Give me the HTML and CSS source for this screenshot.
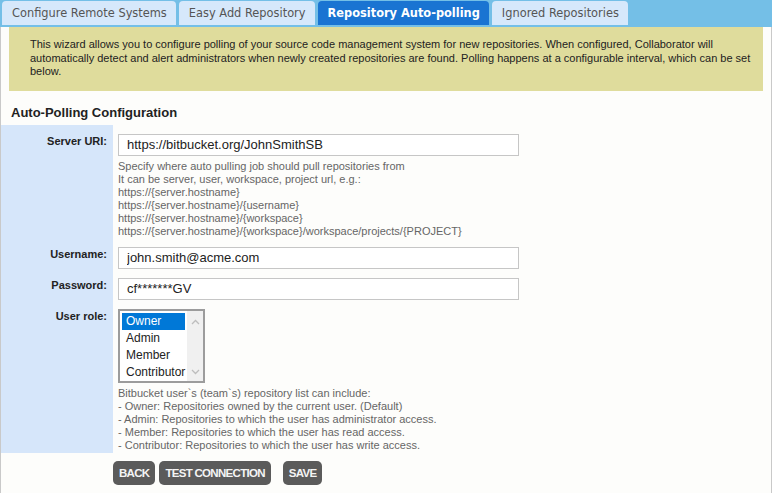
FILE: index.html
```html
<!DOCTYPE html>
<html lang="en">
<head>
    <meta charset="UTF-8">
    <meta name="viewport" content="width=device-width, initial-scale=1.0">
    <title>Repository Auto-polling</title>
    <link rel="stylesheet" href="styles.css">
</head>
<body>
    <div class="tabs">
        <a class="tab">Configure Remote Systems</a>
        <a class="tab">Easy Add Repository</a>
        <a class="tab active">Repository Auto-polling</a>
        <a class="tab">Ignored Repositories</a>
    </div>

    <div class="panel">
        <div class="info">
            This wizard allows you to configure polling of your source code management system for new repositories. When configured, Collaborator will automatically detect and alert administrators when newly created repositories are found. Polling happens at a configurable interval, which can be set below.
        </div>

        <h3 class="section-title">Auto-Polling Configuration</h3>

        <table class="form">
            <tr>
                <th>Server URI:</th>
                <td>
                    <input class="field" type="text" value="https://bitbucket.org/JohnSmithSB">
                    <div class="hint">
                        Specify where auto pulling job should pull repositories from<br>
                        It can be server, user, workspace, project url, e.g.:<br>
                        https://{server.hostname}<br>
                        https://{server.hostname}/{username}<br>
                        https://{server.hostname}/{workspace}<br>
                        https://{server.hostname}/{workspace}/workspace/projects/{PROJECT}
                    </div>
                </td>
            </tr>
            <tr>
                <th>Username:</th>
                <td><input class="field" type="text" value="john.smith@acme.com"></td>
            </tr>
            <tr>
                <th>Password:</th>
                <td><input class="field" type="text" value="cf*******GV"></td>
            </tr>
            <tr class="last">
                <th>User role:</th>
                <td>
                    <div class="listbox">
                        <ul>
                            <li class="selected">Owner</li>
                            <li>Admin</li>
                            <li>Member</li>
                            <li>Contributor</li>
                        </ul>
                        <div class="scroll">
                            <svg width="9" height="6" viewBox="0 0 9 6"><path d="M1 5 L4.5 1.5 L8 5" fill="none" stroke="#bdbdbd" stroke-width="1.3"/></svg>
                            <svg width="9" height="6" viewBox="0 0 9 6"><path d="M1 1 L4.5 4.5 L8 1" fill="none" stroke="#bdbdbd" stroke-width="1.3"/></svg>
                        </div>
                    </div>
                    <div class="hint">
                        Bitbucket user`s (team`s) repository list can include:<br>
                        - Owner: Repositories owned by the current user. (Default)<br>
                        - Admin: Repositories to which the user has administrator access.<br>
                        - Member: Repositories to which the user has read access.<br>
                        - Contributor: Repositories to which the user has write access.
                    </div>
                </td>
            </tr>
        </table>

        <div class="actions">
            <button class="btn">BACK</button>
            <button class="btn">TEST CONNECTION</button>
            <button class="btn save">SAVE</button>
        </div>
    </div>
</body>
</html>
```

FILE: styles.css
```css
body {
    margin: 0;
    font-family: "Liberation Sans", Arial, sans-serif;
    background: #fdfdfb;
    color: #222;
}
.tabs {
    display: flex;
    gap: 3px;
    height: 27px;
    padding: 1px 0 0 2px;
    box-sizing: border-box;
    background: #74bfe7;
}
.tab {
    height: 24px;
    line-height: 24px;
    padding: 0 9px 0 10px;
    background: #d6e8fb;
    color: #555;
    font-family: "DejaVu Sans", Verdana, sans-serif;
    font-size: 11.4px;
    border-radius: 4px 4px 0 0;
}
.tab.active {
    background: #1a74d2;
    color: #fff;
    font-weight: bold;
}
.panel {
    min-height: 466px;
    border-left: 1px solid #c9c9c9;
    border-right: 1px solid #c9c9c9;
}
.info {
    margin: 0 8px;
    padding: 11px 12px 12px 21px;
    background: #dfdc9c;
    font-size: 11px;
    line-height: 13.5px;
    color: #222;
}
.section-title {
    margin: 14px 0 4px 10px;
    font-size: 13px;
    line-height: 16px;
}
.form {
    border-collapse: collapse;
}
.form th {
    width: 106px;
    padding: 9px 6px 0 0;
    background: #d6e6fa;
    text-align: right;
    vertical-align: top;
    font-size: 11px;
    line-height: 14px;
}
.form td {
    padding: 9px 0 0 5px;
    vertical-align: top;
}
.form tr.last th,
.form tr.last td {
    padding-bottom: 1px;
}
.field {
    display: block;
    width: 401px;
    height: 22px;
    box-sizing: border-box;
    margin: 0;
    padding: 0 8px;
    border: 1px solid #c6c6c6;
    background: #fff;
    font-family: "Liberation Sans", Arial, sans-serif;
    font-size: 13px;
    color: #222;
}
.hint {
    margin-top: 4px;
    font-size: 11px;
    line-height: 13px;
    color: #666;
}
.listbox {
    display: flex;
    width: 87px;
    height: 74px;
    box-sizing: border-box;
    border: 2px solid #9c9c9c;
    background: #fff;
}
.listbox ul {
    flex: 1;
    margin: 0;
    padding: 2px;
    list-style: none;
    font-size: 12px;
}
.listbox li {
    height: 17px;
    line-height: 17px;
    padding-left: 4px;
}
.listbox li.selected {
    background: #0078d7;
    color: #fff;
}
.scroll {
    width: 17px;
    display: flex;
    flex-direction: column;
    justify-content: space-between;
    align-items: center;
    padding: 8px 0 6px;
    box-sizing: border-box;
    background: #f0f0f0;
}
.actions {
    display: flex;
    gap: 4px;
    padding: 8px 0 0 112px;
}
.btn {
    height: 24px;
    padding: 0 6px;
    border: none;
    border-radius: 5px;
    background: #5b5b5b;
    color: #f4f4f4;
    font-family: "Liberation Sans", Arial, sans-serif;
    font-weight: bold;
    font-size: 11.5px;
    letter-spacing: -0.7px;
}
.btn.save {
    margin-left: 8px;
}
```
